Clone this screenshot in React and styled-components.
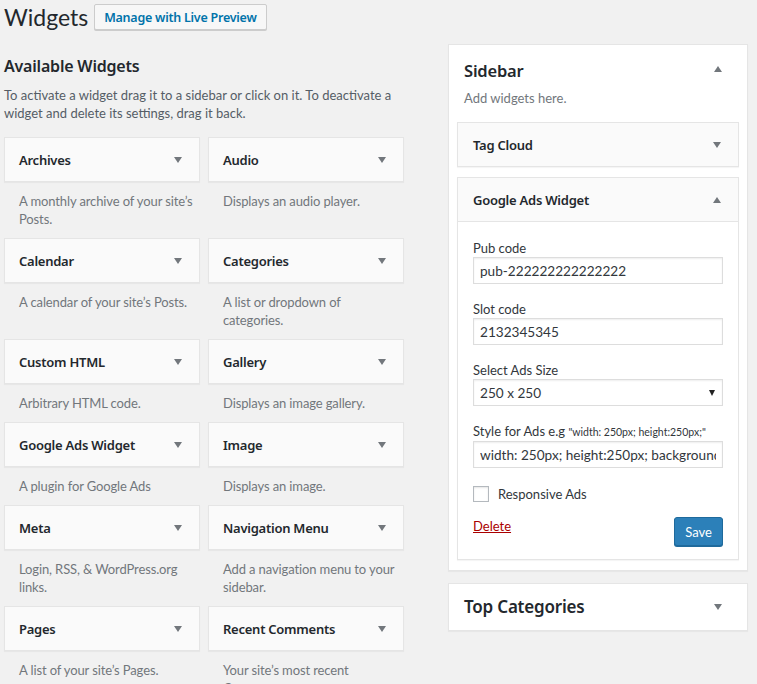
import React from "react";
import styled, { createGlobalStyle } from "styled-components";

const REGULAR = `Lato, "Noto Sans", sans-serif`;
const SEMI = `"Noto Sans", "Open Sans", sans-serif`;

const GlobalStyle = createGlobalStyle`
  html, body { margin: 0; padding: 0; }
  body {
    background: #f1f1f1;
    font-family: ${REGULAR};
    font-size: 13px;
    color: #444;
  }
  * { box-sizing: border-box; }
`;

const Page = styled.div`
  padding: 0 9px 0 4px;
  width: 757px;
`;

const Header = styled.div`
  display: flex;
  align-items: center;
  gap: 6px;
  height: 34px;
`;

const Title = styled.h1`
  margin: 0;
  font-size: 23px;
  font-weight: 400;
  line-height: 34px;
  color: #23282d;
`;

const HeaderButton = styled.button`
  height: 26px;
  padding: 0 9px;
  border: 1px solid #ccc;
  border-radius: 2px;
  background: #f7f7f7;
  box-shadow: 0 1px 0 #ccc;
  color: #0073aa;
  font-family: ${SEMI};
  font-size: 12.5px;
  font-weight: 600;
  letter-spacing: -0.25px;
  cursor: pointer;
`;

const Columns = styled.div`
  display: flex;
  align-items: flex-start;
  gap: 44px;
  margin-top: 10px;
`;

const LeftColumn = styled.div`
  width: 400px;
`;

const SectionTitle = styled.h2`
  margin: 11px 0 0;
  font-family: ${SEMI};
  font-size: 16px;
  font-weight: 600;
  line-height: 22px;
  letter-spacing: -0.2px;
  color: #23282d;
`;

const Intro = styled.p`
  margin: 9px 0 15px;
  line-height: 18px;
  color: #555d66;
`;

const Grid = styled.div`
  display: grid;
  grid-template-columns: 196px 196px;
  column-gap: 8px;
`;

const GridItem = styled.div`
  display: flex;
  flex-direction: column;
`;

const Card = styled.div`
  height: 45px;
  display: flex;
  align-items: center;
  justify-content: space-between;
  padding: 0 17px 0 14px;
  background: #fafafa;
  border: 1px solid #e5e5e5;
  box-shadow: 0 1px 1px rgba(0, 0, 0, 0.04);
`;

const CardTitle = styled.span`
  font-family: ${SEMI};
  font-size: 13px;
  font-weight: 600;
  letter-spacing: -0.25px;
  color: #23282d;
`;

const Arrow = styled.span`
  width: 0;
  height: 0;
  border-left: 4px solid transparent;
  border-right: 4px solid transparent;
  ${(p) =>
    p.$up
      ? "border-bottom: 6px solid #72777c;"
      : "border-top: 6px solid #72777c;"}
`;

const Description = styled.div`
  margin: 10px 0;
  padding: 0 5px 0 15px;
  line-height: 18px;
  letter-spacing: -0.12px;
  color: #72777c;
`;

const RightColumn = styled.div`
  width: 300px;
  display: flex;
  flex-direction: column;
  gap: 12px;
`;

const Panel = styled.div`
  background: #fff;
  border: 1px solid #e5e5e5;
  box-shadow: 0 1px 1px rgba(0, 0, 0, 0.04);
  padding-bottom: ${(p) => p.$pb || 0}px;
`;

const PanelHead = styled.div`
  display: flex;
  justify-content: space-between;
  padding: ${(p) => p.$pt}px 25px 0 15px;
  height: ${(p) => p.$h}px;
  align-items: ${(p) => (p.$center ? "center" : "flex-start")};
`;

const PanelTitle = styled.h2`
  margin: 0;
  font-family: ${SEMI};
  font-size: ${(p) => p.$size || 16.5}px;
  font-weight: 600;
  line-height: 22px;
  letter-spacing: -0.2px;
  color: #23282d;
`;

const PanelNote = styled.p`
  margin: 7px 15px 15px;
  line-height: 18px;
  color: #72777c;
`;

const WidgetList = styled.div`
  display: flex;
  flex-direction: column;
  gap: 10px;
  padding: 0 8px;
`;

const Widget = styled.div`
  border: 1px solid #e5e5e5;
  background: #fafafa;
  box-shadow: 0 1px 1px rgba(0, 0, 0, 0.04);
`;

const WidgetHead = styled.div`
  height: 43px;
  display: flex;
  align-items: center;
  justify-content: space-between;
  padding: 0 17px 0 15px;
`;

const WidgetBody = styled.div`
  background: #fff;
  border-top: 1px solid #e5e5e5;
  padding: 17px 15px 13px;
  display: flex;
  flex-direction: column;
`;

const Field = styled.div`
  margin-bottom: 16px;
`;

const Label = styled.label`
  display: block;
  line-height: 18px;
  color: #32373c;
`;

const Hint = styled.span`
  font-size: 10.5px;
`;

const TextInput = styled.input`
  display: block;
  width: 100%;
  height: 27px;
  margin: 0;
  padding: 0 6px;
  border: 1px solid #ddd;
  box-shadow: inset 0 1px 2px rgba(0, 0, 0, 0.07);
  background: #fff;
  color: #32373c;
  font-family: inherit;
  font-size: 13.6px;
  outline: none;
`;

const SelectWrap = styled.div`
  position: relative;
`;

const Select = styled.select`
  display: block;
  width: 100%;
  height: 27px;
  margin: 0;
  padding: 0 6px;
  border: 1px solid #ddd;
  box-shadow: inset 0 1px 2px rgba(0, 0, 0, 0.07);
  background: #fff;
  color: #32373c;
  font-family: inherit;
  font-size: 13.6px;
  appearance: none;
  -webkit-appearance: none;
  outline: none;
`;

const SelectArrow = styled.span`
  position: absolute;
  right: 8px;
  top: 11px;
  width: 0;
  height: 0;
  border-left: 3.5px solid transparent;
  border-right: 3.5px solid transparent;
  border-top: 6px solid #222;
  pointer-events: none;
`;

const CheckRow = styled.label`
  display: flex;
  align-items: center;
  gap: 9px;
  margin-top: 1px;
  line-height: 18px;
  color: #32373c;
`;

const CheckBox = styled.input`
  appearance: none;
  -webkit-appearance: none;
  width: 16px;
  height: 16px;
  margin: 0;
  border: 1px solid #b4b9be;
  background: #fff;
  box-shadow: inset 0 1px 2px rgba(0, 0, 0, 0.1);
`;

const Actions = styled.div`
  display: flex;
  justify-content: space-between;
  align-items: flex-start;
  margin-top: 14px;
`;

const DeleteLink = styled.a`
  color: #a00;
  text-decoration: underline;
  line-height: 18px;
  cursor: pointer;
`;

const SaveButton = styled.button`
  height: 29px;
  padding: 0 10px;
  border: 1px solid #1f6a9c;
  border-radius: 3px;
  background: #2c80b9;
  box-shadow: 0 1px 0 #1f6a9c;
  color: #fff;
  font-family: inherit;
  font-size: 13px;
  cursor: pointer;
`;

const widgets = [
  ["Archives", "A monthly archive of your site’s Posts."],
  ["Audio", "Displays an audio player."],
  ["Calendar", "A calendar of your site’s Posts."],
  ["Categories", "A list or dropdown of categories."],
  ["Custom HTML", "Arbitrary HTML code."],
  ["Gallery", "Displays an image gallery."],
  ["Google Ads Widget", "A plugin for Google Ads"],
  ["Image", "Displays an image."],
  ["Meta", "Login, RSS, & WordPress.org links."],
  ["Navigation Menu", "Add a navigation menu to your sidebar."],
  ["Pages", "A list of your site’s Pages."],
  ["Recent Comments", "Your site’s most recent Comments."],
];

export default function App() {
  return (
    <Page>
      <GlobalStyle />
      <Header>
        <Title>Widgets</Title>
        <HeaderButton>Manage with Live Preview</HeaderButton>
      </Header>
      <Columns>
        <LeftColumn>
          <SectionTitle>Available Widgets</SectionTitle>
          <Intro>
            To activate a widget drag it to a sidebar or click on it. To
            deactivate a widget and delete its settings, drag it back.
          </Intro>
          <Grid>
            {widgets.map(([name, desc]) => (
              <GridItem key={name}>
                <Card>
                  <CardTitle>{name}</CardTitle>
                  <Arrow />
                </Card>
                <Description>{desc}</Description>
              </GridItem>
            ))}
          </Grid>
        </LeftColumn>
        <RightColumn>
          <Panel $pb={10}>
            <PanelHead $pt={15} $h={37}>
              <PanelTitle>Sidebar</PanelTitle>
              <Arrow $up style={{ marginTop: 6 }} />
            </PanelHead>
            <PanelNote>Add widgets here.</PanelNote>
            <WidgetList>
              <Widget>
                <WidgetHead>
                  <CardTitle>Tag Cloud</CardTitle>
                  <Arrow />
                </WidgetHead>
              </Widget>
              <Widget>
                <WidgetHead>
                  <CardTitle>Google Ads Widget</CardTitle>
                  <Arrow $up />
                </WidgetHead>
                <WidgetBody>
                  <Field>
                    <Label>Pub code</Label>
                    <TextInput defaultValue="pub-222222222222222" />
                  </Field>
                  <Field>
                    <Label>Slot code</Label>
                    <TextInput defaultValue="2132345345" />
                  </Field>
                  <Field>
                    <Label>Select Ads Size</Label>
                    <SelectWrap>
                      <Select defaultValue="250 x 250">
                        <option>250 x 250</option>
                        <option>300 x 250</option>
                        <option>728 x 90</option>
                      </Select>
                      <SelectArrow />
                    </SelectWrap>
                  </Field>
                  <Field>
                    <Label>
                      Style for Ads e.g{" "}
                      <Hint>"width: 250px; height:250px;"</Hint>
                    </Label>
                    <TextInput defaultValue="width: 250px; height:250px; background: #fff;" />
                  </Field>
                  <CheckRow>
                    <CheckBox type="checkbox" />
                    Responsive Ads
                  </CheckRow>
                  <Actions>
                    <DeleteLink>Delete</DeleteLink>
                    <SaveButton>Save</SaveButton>
                  </Actions>
                </WidgetBody>
              </Widget>
            </WidgetList>
          </Panel>
          <Panel>
            <PanelHead $h={46} $pt={0} $center>
              <PanelTitle $size={17}>Top Categories</PanelTitle>
              <Arrow />
            </PanelHead>
          </Panel>
        </RightColumn>
      </Columns>
    </Page>
  );
}
